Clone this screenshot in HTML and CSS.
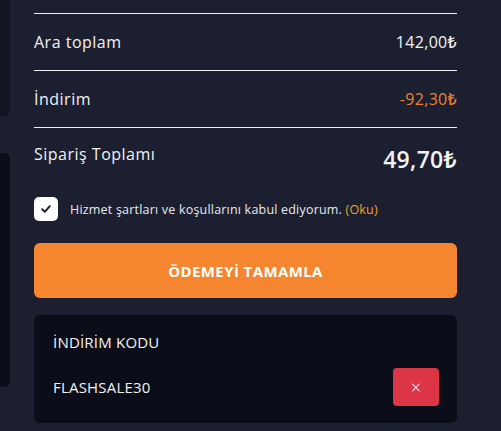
FILE: index.html
```html
<!DOCTYPE html>
<html lang="tr">
<head>
<meta charset="utf-8">
<link rel="stylesheet" href="styles.css">
</head>
<body>
<div class="page">
  <aside class="side">
    <div class="side-panel side-top"></div>
    <div class="side-panel side-bottom"></div>
  </aside>
  <main class="summary">
    <div class="row">
      <span class="label">Ara toplam</span>
      <span class="value">142,00₺</span>
    </div>
    <div class="row">
      <span class="label">İndirim</span>
      <span class="value discount">-92,30₺</span>
    </div>
    <div class="row total">
      <span class="label">Sipariş Toplamı</span>
      <span class="value total-value">49,70₺</span>
    </div>
    <label class="terms">
      <span class="checkbox">
        <svg width="12" height="12" viewBox="0 0 12 12"><path d="M2.2 6.3 L4.8 8.8 L9.8 3.2" fill="none" stroke="#1b1f30" stroke-width="2" stroke-linecap="round" stroke-linejoin="round"/></svg>
      </span>
      <span class="terms-text">Hizmet şartları ve koşullarını kabul ediyorum. <span class="read">(Oku)</span></span>
    </label>
    <button class="pay">ÖDEMEYİ TAMAMLA</button>
    <section class="coupon">
      <div class="coupon-title">İNDİRİM KODU</div>
      <div class="coupon-row">
        <span class="coupon-code">FLASHSALE30</span>
        <button class="remove">×</button>
      </div>
    </section>
  </main>
</div>
</body>
</html>
```
FILE: styles.css
```css
* { box-sizing: border-box; }
html, body {
  margin: 0;
  padding: 0;
  background: #1b1f30;
  color: #f2f2f4;
  font-family: "Open Sans", "Noto Sans", sans-serif;
}
.page {
  display: flex;
  width: 501px;
  height: 431px;
  overflow: hidden;
}
.side {
  width: 10px;
  flex: none;
  display: flex;
  flex-direction: column;
}
.side-panel {
  background: #111522;
  border-radius: 0 6px 6px 0;
}
.side-top {
  height: 136px;
  margin-top: -20px;
}
.side-bottom {
  height: 234px;
  margin-top: 37px;
  background: #0b0e19;
}
.summary {
  width: 423px;
  margin-left: 24px;
  padding-top: 13px;
  display: flex;
  flex-direction: column;
}
.row {
  display: flex;
  justify-content: space-between;
  align-items: center;
  height: 57px;
  border-top: 1px solid #eef0f4;
}
.label {
  font-size: 16px;
  font-weight: 500;
  letter-spacing: 0.5px;
}
.value {
  font-size: 16px;
  font-weight: 500;
  letter-spacing: 0.3px;
}
.discount {
  color: #f0812e;
}
.row.total {
  align-items: flex-start;
  height: 62px;
  padding-top: 15px;
}
.total-value {
  font-size: 23px;
  font-weight: 600;
  letter-spacing: 0.3px;
}
.terms {
  display: flex;
  align-items: center;
  gap: 12px;
  margin-top: 8px;
}
.checkbox {
  width: 24px;
  height: 24px;
  border-radius: 5px;
  background: #ffffff;
  display: flex;
  align-items: center;
  justify-content: center;
}
.terms-text {
  font-size: 12.5px;
  font-weight: 500;
  letter-spacing: 0.2px;
  color: #e8e9ee;
}
.read {
  color: #f0a22a;
}
.pay {
  margin-top: 22px;
  height: 55px;
  border: none;
  border-radius: 6px;
  background: #f5852f;
  color: #ffffff;
  font-family: inherit;
  font-size: 15px;
  font-weight: 700;
  letter-spacing: 0.4px;
}
.coupon {
  margin-top: 17px;
  height: 108px;
  background: #0b0e19;
  border-radius: 6px;
  padding: 17px 18px 0 19px;
}
.coupon-title {
  font-size: 15px;
  font-weight: 500;
  line-height: 20px;
  letter-spacing: 0.2px;
}
.coupon-row {
  display: flex;
  justify-content: space-between;
  align-items: center;
  margin-top: 16px;
}
.coupon-code {
  font-size: 15px;
  font-weight: 500;
  letter-spacing: 0.2px;
}
.remove {
  width: 46px;
  height: 38px;
  border: none;
  border-radius: 4px;
  background: #dc3545;
  color: #ffffff;
  font-family: inherit;
  font-size: 18px;
  font-weight: 300;
  line-height: 1;
}
```
